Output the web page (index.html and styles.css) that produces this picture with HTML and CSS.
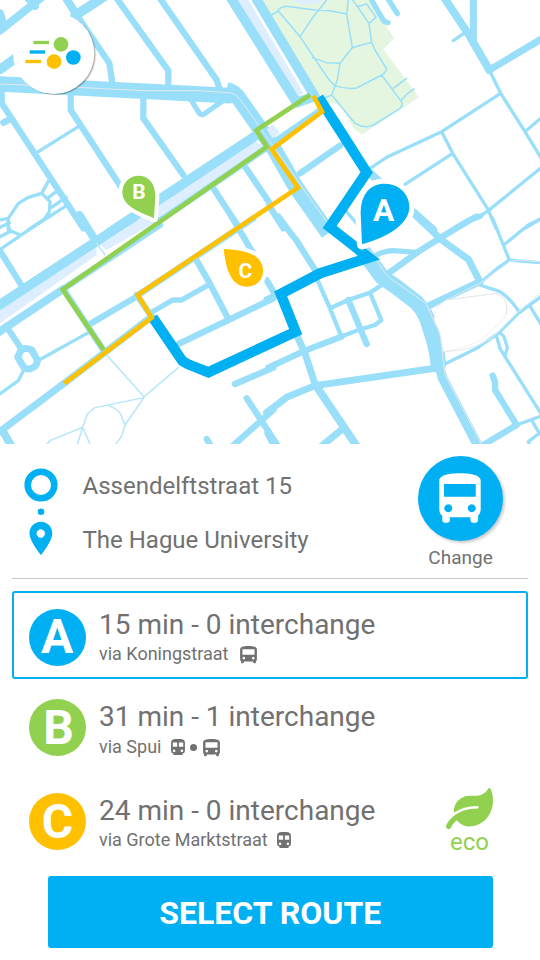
FILE: index.html
```
<!DOCTYPE html>
<html lang="en">
<head>
<meta charset="utf-8">
<title>Select route</title>
<link rel="stylesheet" href="styles.css">
</head>
<body>
<svg width="0" height="0" class="defs">
  <symbol id="bus" viewBox="0 0 50 52">
    <path fill-rule="evenodd" d="M0 11C0 3 9 0 25 0S50 3 50 11V40Q50 44 47 45V49Q47 52 44 52H42Q39 52 39 49V46H11V49Q11 52 8 52H6Q3 52 3 49V45Q0 44 0 40ZM7 10V26H43V10ZM11 32a4 4 0 1 0 .1 0ZM39 32a4 4 0 1 0 .1 0Z"/>
  </symbol>
  <symbol id="train" viewBox="4 2 16 19">
    <path fill-rule="evenodd" d="M12 2c-4.42 0-8 .5-8 4v9.5C4 17.43 5.57 19 7.5 19L6 20.5v.5h12v-.5L16.5 19c1.93 0 3.5-1.57 3.5-3.5V6c0-3.5-3.58-4-8-4zM7.5 17c-.83 0-1.5-.67-1.5-1.5S6.67 14 7.5 14s1.5.67 1.5 1.5S8.33 17 7.5 17zm3.5-6H6V6h5v5zm5.5 6c-.83 0-1.5-.67-1.5-1.5s.67-1.5 1.5-1.5 1.5.67 1.5 1.5-.67 1.5-1.5 1.5zm1.5-6h-5V6h5v5z"/>
  </symbol>
</svg>
<main class="screen">
  <svg class="map" viewBox="0 0 1620 1333">
    <g class="water">
      <path d="M370 675L480 600L750 412L790 440L470 655L430 690Z"/>
      <path d="M705 0H745L910 278L888 300Z"/>
      <path d="M0 930L290 742V765L0 970Z"/>
      <path d="M300 735L440 645L480 658L320 750Z"/>
    </g>
    <path class="park" d="M775 0H1108L1182 115L1150 148L1257 292L1088 403L1065 390L1025 325Q1010 308 990 308L960 318L935 285L805 70Z"/>
    <path class="water" d="M878 0Q895 13 925 13T970 0Z"/>
    <g class="road" transform="translate(810 0)">
      <g class="w4">
        <path d="M-8 52L20 36Q30 20 48 19L135 30L180 32L230 42M25 33L90 110L160 215Q180 245 195 257Q230 269 260 264L335 225Q352 215 349 205L315 150L305 127L297 70L245 -5M90 110L130 50L170 0M235 0L230 42L247 143L210 190L170 188L127 173M247 143L305 127M210 190L202 240L185 285L255 370Q283 387 310 375L390 325Q402 315 392 302L335 225M185 285L150 300M370 265L410 235M392 302Q410 280 432 267M262 20L290 12L318 52L297 70"/>
      </g>
    </g>
    <g class="road">
      <path class="w24" d="M0 92L130 -12M85 -5L105 18M195 -10L232 48M0 40L12 80"/>
      <path class="w28" d="M225 47L315 -12M0 208L50 172"/>
      <path class="w18" d="M232 48L328 190L337 250M350 -5L505 212V255M480 -5L650 240L658 265M5 280V310L250 685M10 368L35 355M212 290V330L375 580M430 300V355L550 525"/>
      <path class="w14" d="M572 298L598 340Q605 348 614 341L665 305"/>
      <path class="w10" d="M115 455L235 380M25 690V655L55 610L85 592L125 580L150 605L148 635L130 662M0 660L25 655M125 580L150 535M142 595L175 570M155 622L198 592M85 690L205 613"/>
      <path class="w50" d="M0 252L420 273L690 287"/>
      <path class="w50 flat" d="M680 270Q704 275 720 300L818 440L888 562L985 700"/>
      <path class="w28" d="M325 700L770 405M690 -10L890 308L935 292M765 -10L945 290"/>
      <path class="w18" d="M470 668L805 440M640 565L718 685M735 500L808 608M805 438L965 328M900 520L1020 437"/>
      <path class="w18" d="M808 618L850 685"/>
    </g>
    <path class="water" d="M800 388L820 373L840 400L817 415Z"/>
    <g class="road" transform="translate(810 0)">
      <path class="w10" d="M658 210L692 280L765 395L820 485M692 280L515 395L350 472L300 505M515 395L548 460L655 630L678 685M405 553L548 460M765 395L818 350M815 502L655 632L620 655M765 685L815 655M225 630L260 670M550 122L585 98"/>
      <path class="w14" d="M300 -8L336 54Q342 66 354 68M350 -10L382 41M632 648L590 665L555 685"/>
      <path class="w20" d="M610 -5V130M658 210L818 115"/>
      <path class="w24" d="M522 -8L600 110L658 210M300 520L490 690"/>
    </g>
    <g class="road" transform="translate(0 660)">
      <path class="w28" d="M-5 257L400 -8"/>
      <path class="w24" d="M238 -15L285 60M-5 337L190 207M8 633L38 685"/>
      <path class="w18" d="M190 207L480 15M0 93L70 205M18 318L65 388M190 207L310 390M410 225L455 290M270 312L410 230M415 225L760 -5M588 118L628 188L685 297M530 375L820 235M695 -10L768 115M705 492L820 443M740 535L830 672M690 685L820 570M620 657L640 690"/>
      <path class="w20" d="M62 392Q75 380 95 390L112 420Q112 440 90 447Q75 448 70 440L53 412Z"/>
      <path class="w20" d="M-5 638L195 488L455 290"/>
      <path class="w14" d="M450 280L518 240H545L628 193"/>
      <path class="w10" d="M112 423L265 338M72 448L55 482L-5 525M-5 92L60 48L140 -8M25 -5Q20 25 35 34L60 45M0 22L28 8M0 50L32 34"/>
      <path class="w4 pale" d="M290 70L315 105M315 400L432 530L438 525L535 443M432 533L285 563L262 582L248 622L272 678M248 622L150 662L138 675M248 622L230 680M325 557Q350 565 362 582L375 615L367 643Q360 660 342 678M375 615L432 533"/>
    </g>
    <g class="road" transform="translate(810 660)">
      <path class="w50" d="M278 92L335 170L385 205L440 248Q468 275 482 330Q500 380 505 432"/>
      <path class="w28" d="M505 430L518 475L628 685"/>
      <path class="w18" d="M-10 180L10 215M-10 238L20 225M25 -10L70 50M75 55L145 165M235 240L290 372M-5 443L105 392L215 350M355 160L445 95L530 42L600 0L620 -10M668 467L675 485V510L740 615L640 675"/>
      <path class="w12" d="M140 175L180 265L212 345M180 265L235 240L300 218L340 192M300 218L334 300L315 315L265 330L200 355"/>
      <path class="w14" d="M320 105Q345 92 370 92L440 97"/>
      <path class="w20" d="M80 345L105 400L135 492M-10 578L50 532L135 497L495 445M150 682L220 625M430 -20L515 60L595 118L630 185L475 258"/>
      <path class="w24" d="M140 500L268 690M-5 640L22 690"/>
      <path class="w10" d="M635 185L680 147L718 120L820 129M668 -5L718 120M705 72L775 15L815 -5M630 195L690 215Q720 235 745 272M525 432L620 385L685 340L745 280L820 225M778 255L820 325M680 350L690 385L705 410L820 592M690 338L702 350L712 382L705 410M740 615L820 586M785 600L808 640L775 665L785 685M808 640L820 648"/>
      <path class="island" d="M530 240L680 220Q700 228 707 245Q715 280 700 298L640 355Q590 388 520 394L510 340L493 302Q490 262 530 240Z"/>
    </g>
    <g class="tram">
      <path d="M0 252L150 258L430 272H600L695 279Q710 284 722 300L810 425L980 665"/>
      <path d="M1110 750L1145 805Q1170 840 1200 855L1280 912Q1295 950 1320 1000L1335 1125L1448 1340M1285 932L1340 900L1440 850L1530 785L1550 780L1625 785M1340 900L1490 880Q1530 900 1520 945M1330 1055Q1420 1055 1480 1010L1550 940L1625 875"/>
    </g>
    <path class="line blue" d="M956 292L1035 415L1100 517L989 681L1107 773L960 820L842 882L887 995L625 1117L562 1092L547 1083L458 952"/>
    <path class="line green" d="M930 285L769 391L801 440L188 869L311 1050"/>
    <path class="line amber" d="M940 288L966 335L815 448L894 563L413 885L455 953L193 1150"/>
    <g class="pin">
      <path class="fill-blue halo" d="M1086 733L1082 640C1082 582 1111 551 1154 551C1200 551 1228 585 1228 622C1228 670 1165 712 1086 733Z"/>
      <path class="fill-green" d="M462 655C430 640 367 622 367 577C367 548 388 527 416 527C444 527 466 548 466 590Z"/>
      <path class="fill-amber" d="M671 747C740 750 789 765 789 812C789 840 768 860 740 860C700 860 678 820 671 747Z"/>
      <text class="big" x="1151" y="663">A</text>
      <text x="417" y="598">B</text>
      <text x="736" y="833">C</text>
    </g>
    <circle class="logo-disc" cx="161" cy="160" r="122"/>
    <g class="logo">
      <path class="dash green" d="M100 127.5H147"/><circle class="fill-green" cx="183" cy="133" r="22"/>
      <path class="dash blue" d="M89 156H135"/><circle class="fill-blue" cx="220" cy="172.5" r="22"/>
      <path class="dash amber" d="M76 184.5H123"/><circle class="fill-amber" cx="162" cy="185" r="22"/>
    </g>
  </svg>

  <section class="trip">
    <svg class="trip-icons" viewBox="0 0 34 90">
      <circle class="ring" cx="17" cy="18" r="13.3"/>
      <circle class="fill-blue" cx="17" cy="44.8" r="3.3"/>
      <path class="fill-blue" fill-rule="evenodd" d="M17 54.8C10.5 54.8 5.5 59.8 5.5 66.2C5.5 74.5 17 88 17 88S28.3 74.5 28.3 66.2C28.3 59.8 23.3 54.8 17 54.8ZM16.8 62.3A4.2 4.2 0 1 1 16.7 62.3Z"/>
    </svg>
    <div class="places">
      <div class="place">Assendelftstraat 15</div>
      <div class="place">The Hague University</div>
    </div>
    <div class="mode">
      <div class="mode-disc">
        <svg viewBox="150 67 125 151">
          <path fill-rule="evenodd" d="M150 90C150 72 185 68 212 68S275 72 275 90V178Q275 190 267 196V210Q267 217 260 217H251Q244 217 244 210V201H182V210Q182 217 175 217H166Q159 217 159 210V196Q150 190 150 178ZM164 100V139H260V100ZM177 161.5a12 12 0 1 0 .1 0ZM248 161.5a12 12 0 1 0 .1 0Z"/>
        </svg>
      </div>
      <div class="mode-label">Change</div>
    </div>
  </section>

  <section class="routes">
    <article class="route selected">
      <div class="badge bg-blue"><span>A</span></div>
      <div class="info">
        <div class="time">15 min - 0 interchange</div>
        <div class="via"><span>via Koningstraat</span><svg class="bus"><use href="#bus"/></svg></div>
      </div>
    </article>
    <article class="route route-b">
      <div class="badge bg-green"><span>B</span></div>
      <div class="info">
        <div class="time">31 min - 1 interchange</div>
        <div class="via"><span>via Spui</span><svg class="train"><use href="#train"/></svg><i class="dot"></i><svg class="bus"><use href="#bus"/></svg></div>
      </div>
    </article>
    <article class="route route-c">
      <div class="badge bg-amber"><span>C</span></div>
      <div class="info">
        <div class="time">24 min - 0 interchange</div>
        <div class="via"><span>via Grote Marktstraat</span><svg class="train"><use href="#train"/></svg></div>
      </div>
      <div class="eco">
        <svg viewBox="0 0 576 512" preserveAspectRatio="none"><path d="M546.2 9.7c-5.6-12.5-21.6-13-28.3-1.2C486.9 62.4 431.4 96 368 96h-80C182 96 96 182 96 288c0 7 .8 13.7 1.5 20.5C161.3 262.8 253.4 224 384 224c8.8 0 16 7.2 16 16s-7.2 16-16 16C132.6 256 26 410.1 2.4 468c-6.6 16.3 1.2 34.9 17.5 41.6 16.4 6.8 35-1.1 41.8-17.3 1.5-3.6 20.9-47.9 71.9-90.6 32.4 43.9 94 85.8 174.9 77.2C465.5 467.5 576 326.7 576 154.3c0-50.2-10.8-102.2-29.8-144.6z"/></svg>
        <span>eco</span>
      </div>
    </article>
  </section>
  <button class="select">SELECT ROUTE</button>
</main>
</body>
</html>
```
FILE: styles.css
```
* { box-sizing: border-box; }
body { margin: 0; background: #fff; font-family: Roboto, "Liberation Sans", sans-serif; color: #717171; }
.defs { position: absolute; }
.screen { display: flex; flex-direction: column; width: 540px; height: 960px; overflow: hidden; }
.map { display: block; width: 540px; height: 444.3px; flex: none; }

.water { fill: #dceeff; }
.park { fill: #e4f6df; }
.road { fill: none; stroke: #9adffa; stroke-linecap: round; stroke-linejoin: round; }
.flat { stroke-linecap: butt; }
.w4 { stroke-width: 4.5; }
.w10 { stroke-width: 10; }
.w12 { stroke-width: 13; }
.w14 { stroke-width: 16; }
.w18 { stroke-width: 19; }
.w20 { stroke-width: 21; }
.w24 { stroke-width: 24; }
.w28 { stroke-width: 29; }
.w50 { stroke-width: 47; }
.pale { stroke: #b5e7fa; }
.island { fill: #fff; stroke: #eee; stroke-width: 3; }
.tram { fill: none; stroke: #e3eaee; stroke-width: 3; }
.line { fill: none; stroke-linejoin: miter; stroke-width: 14; }
.line.blue { stroke-width: 31; }
.blue { stroke: #00b0f2; }
.green { stroke: #92d14f; }
.amber { stroke: #ffc000; }
.fill-blue { fill: #00b0f2; }
.fill-green { fill: #92d14f; }
.fill-amber { fill: #ffc000; }
.pin path { stroke: #fff; stroke-width: 24; stroke-linejoin: round; paint-order: stroke; }
.pin .halo { stroke-width: 31; }
.pin text { fill: #fff; font-weight: 700; font-size: 63px; text-anchor: middle; }
.pin .big { font-size: 95px; }
.logo-disc { fill: #fff; filter: drop-shadow(4px 3px 2px rgba(0, 0, 0, .3)); }
.dash { stroke-width: 10; }

.trip { display: flex; height: 134.7px; margin: 0 12px; border-bottom: 1.5px solid #c8c8c8; flex: none; }
.trip-icons { width: 34px; height: 90px; margin: 22.7px 0 0 12px; flex: none; }
.ring { fill: none; stroke: #00b0f2; stroke-width: 6.6; }
.places { width: 310px; margin-left: 24.5px; padding-top: 14.7px; flex: none; }
.place { height: 54px; line-height: 54px; font-size: 24px; white-space: nowrap; }
.mode { width: 86px; margin: 11.7px 0 0 25px; display: flex; flex-direction: column; align-items: center; flex: none; }
.mode-disc { width: 85.4px; height: 85.4px; border-radius: 50%; background: #00b0f2; display: flex; justify-content: center; padding-top: 17px; box-shadow: 2px 2px 3px rgba(0, 0, 0, .2); }
.mode-disc svg { width: 42px; height: 50px; fill: #fff; }
.mode-label { font-size: 19px; line-height: 24px; margin-top: 4.6px; }

.routes { padding: 12px 12px 0; flex: none; }
.route { height: 88px; display: flex; border: 2px solid transparent; border-radius: 3px; padding: 16px 0 0 15px; }
.route.selected { border-color: #00b0f2; }
.route-b { margin-top: 2px; }
.route-c { margin-top: 6px; }
.badge { width: 57px; height: 57px; border-radius: 50%; color: #fff; font-size: 48px; font-weight: 700; line-height: 56px; text-align: center; flex: none; }
.selected .badge { padding-right: 1px; }
.route-b .badge { padding-left: 2px; line-height: 58px; }
.route-c .badge { line-height: 58px; }
.bg-blue { background: #00b0f2; }
.bg-green { background: #92d14f; }
.bg-amber { background: #ffc000; }
.info { width: 330px; margin-left: 13px; }
.route-b .info, .route-c .info { padding-top: 2px; }
.route-b .via { padding-top: 1px; }
.time { font-size: 28px; line-height: 32px; white-space: nowrap; }
.via { display: flex; align-items: center; font-size: 18px; line-height: 26px; white-space: nowrap; fill: #717171; }
.bus { width: 17px; height: 17.5px; margin: 2px 0 0 12px; }
.train { width: 14px; height: 16.5px; margin-left: 9.5px; }
.dot { width: 7px; height: 7px; border-radius: 50%; background: #717171; margin: 2px 0 0 5px; }
.dot + .bus { margin-left: 6px; }
.eco { width: 47px; margin: -5px 0 0 17px; display: flex; flex-direction: column; align-items: center; color: #92d14f; font-size: 24px; line-height: 26px; }
.eco svg { width: 47px; height: 41px; fill: #92d14f; flex: none; }
.select { width: 445.5px; height: 72px; margin: 13px 0 0 47.5px; border: 0; border-radius: 3px; background: #00b0f2; color: #fff; font: 700 32px/72px Roboto, "Liberation Sans", sans-serif; padding: 1px 0 0; flex: none; }
```
